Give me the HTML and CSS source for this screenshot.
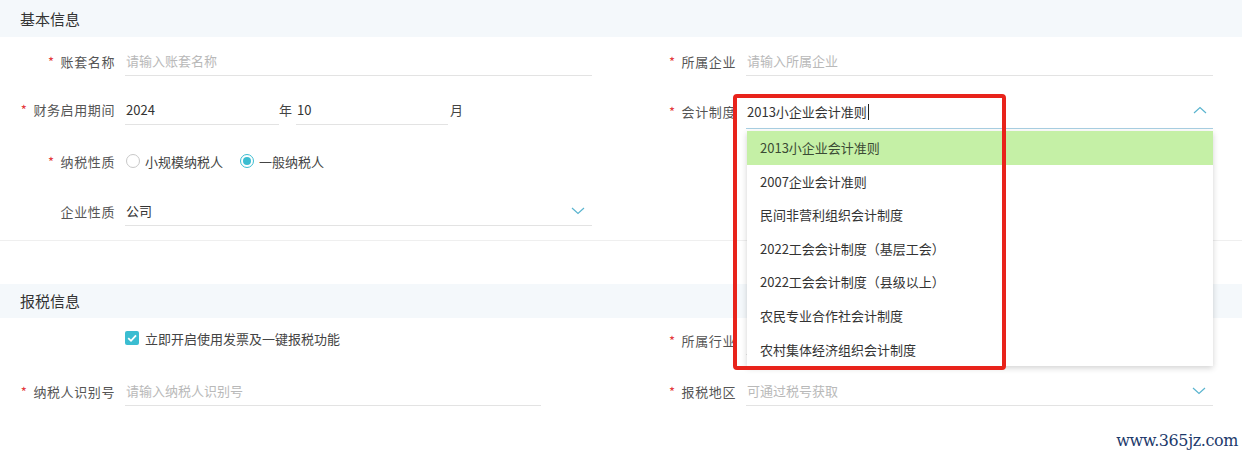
FILE: index.html
```html
<!DOCTYPE html>
<html lang="zh-CN">
<head>
<meta charset="utf-8">
<title>账套</title>
<link rel="stylesheet" href="styles.css">
</head>
<body>
<div class="page">
  <div class="section-title">基本信息</div>
  <div class="grid basic">
    <div class="field">
      <label class="lbl"><span class="req">*</span>账套名称</label>
      <div class="ctl"><span class="ph">请输入账套名称</span></div>
    </div>
    <div class="field">
      <label class="lbl"><span class="req">*</span>所属企业</label>
      <div class="ctl"><span class="ph">请输入所属企业</span></div>
    </div>

    <div class="field up">
      <label class="lbl"><span class="req">*</span>财务启用期间</label>
      <div class="period">
        <div class="ctl year"><span class="val">2024</span></div>
        <span class="unit">年</span>
        <div class="ctl month"><span class="val">10</span></div>
        <span class="unit">月</span>
      </div>
    </div>
    <div class="field">
      <label class="lbl"><span class="req">*</span>会计制度</label>
      <div class="ctl active"><span class="val">2013小企业会计准则</span><span class="caret"></span>
        <svg class="chev" width="14" height="8" viewBox="0 0 14 8"><polyline points="1,7 7,1.5 13,7" fill="none" stroke="#5ab4cf" stroke-width="1.2"/></svg>
      </div>
    </div>

    <div class="field">
      <label class="lbl"><span class="req">*</span>纳税性质</label>
      <div class="radios">
        <span class="radio"><span class="rdot"></span>小规模纳税人</span>
        <span class="radio on"><span class="rdot"></span>一般纳税人</span>
      </div>
    </div>
    <div class="field"></div>

    <div class="field">
      <label class="lbl">企业性质</label>
      <div class="ctl"><span class="val">公司</span>
        <svg class="chev" width="14" height="8" viewBox="0 0 14 8"><polyline points="1,1 7,6.5 13,1" fill="none" stroke="#5ab4cf" stroke-width="1.2"/></svg>
      </div>
    </div>
    <div class="field"></div>
  </div>

  <div class="sep"></div>

  <div class="section-title second">报税信息</div>
  <div class="grid tax">
    <div class="field">
      <label class="lbl"></label>
      <div class="check"><span class="cbox"><svg width="14" height="14" viewBox="0 0 14 14"><polyline points="3.2,7.2 6,9.8 11,4.4" fill="none" stroke="#fff" stroke-width="1.8"/></svg></span>立即开启使用发票及一键报税功能</div>
    </div>
    <div class="field">
      <label class="lbl"><span class="req">*</span>所属行业</label>
      <div class="ctl"></div>
    </div>

    <div class="field">
      <label class="lbl"><span class="req">*</span>纳税人识别号</label>
      <div class="ctl short"><span class="ph">请输入纳税人识别号</span></div>
    </div>
    <div class="field">
      <label class="lbl"><span class="req">*</span>报税地区</label>
      <div class="ctl"><span class="ph">可通过税号获取</span>
        <svg class="chev" width="14" height="8" viewBox="0 0 14 8"><polyline points="1,1 7,6.5 13,1" fill="none" stroke="#5ab4cf" stroke-width="1.2"/></svg>
      </div>
    </div>
  </div>

  <ul class="dropdown">
    <li class="sel">2013小企业会计准则</li>
    <li>2007企业会计准则</li>
    <li>民间非营利组织会计制度</li>
    <li>2022工会会计制度（基层工会）</li>
    <li>2022工会会计制度（县级以上）</li>
    <li>农民专业合作社会计制度</li>
    <li>农村集体经济组织会计制度</li>
  </ul>
  <div class="highlight"></div>

  <div class="watermark">www.365jz.com</div>
</div>
</body>
</html>
```

FILE: styles.css
```css
* { box-sizing: border-box; }
html, body { margin: 0; padding: 0; background: #fff; }
body {
  font-family: "Noto Sans CJK SC", "Noto Sans", sans-serif;
  font-size: 13px;
  color: #333;
}
.page {
  position: relative;
  width: 1242px;
  height: 458px;
  overflow: hidden;
}
.section-title {
  height: 37px;
  line-height: 37px;
  padding-left: 20px;
  font-size: 15px;
  color: #333;
  background: #f4f8fb;
}
.section-title.second {
  margin-top: 43px;
  height: 34px;
  line-height: 34px;
}
.grid {
  display: grid;
  grid-template-columns: 621px 621px;
}
.basic { grid-auto-rows: 50px; margin-top: -1px; }
.tax { grid-template-rows: 44px 58px; }
.field {
  display: flex;
  align-items: center;
}
.field.up { padding-bottom: 3px; }
.lbl {
  width: 115px;
  margin-right: 10px;
  text-align: right;
  color: #555;
  letter-spacing: 0.6px;
  white-space: nowrap;
}
.req {
  color: #e4393c;
  margin-right: 6px;
  font-size: 13px;
}
.ctl {
  position: relative;
  width: 467px;
  height: 30px;
  display: flex;
  align-items: center;
  padding-left: 1px;
  border-bottom: 1px solid #e3e3e3;
}
.ctl.short { width: 416px; }
.ctl.active { border-bottom-color: #a9d0e3; height: 34px; margin-top: 2px; }
.ph { color: #b9b9b9; }
.val { color: #333; }
.caret {
  display: inline-block;
  width: 1px;
  height: 16px;
  background: #222;
  margin-left: 1px;
}
.chev {
  position: absolute;
  right: 7px;
  top: 11px;
}
.ctl.active .chev { top: 11px; right: 6px; }
.period {
  display: flex;
  align-items: center;
}
.ctl.year { width: 154px; }
.ctl.month { width: 152px; }
.unit {
  width: 17px;
  color: #444;
}
.unit:last-child { margin-left: 2px; }
.radios {
  display: flex;
  align-items: center;
  padding-left: 1px;
}
.radio {
  display: inline-flex;
  align-items: center;
  margin-right: 17px;
  color: #444;
}
.rdot {
  width: 14px;
  height: 14px;
  border: 1px solid #c8c8c8;
  border-radius: 50%;
  margin-right: 5px;
  position: relative;
}
.radio.on .rdot { border-color: #3bbdd1; }
.radio.on .rdot::after {
  content: "";
  position: absolute;
  left: 2px; top: 2px;
  width: 8px; height: 8px;
  border-radius: 50%;
  background: #3bbdd1;
}
.check {
  display: flex;
  align-items: center;
  color: #444;
  margin-top: -4px;
}
.cbox {
  width: 14px;
  height: 14px;
  border-radius: 2px;
  background: #3bbdd1;
  margin-right: 6px;
  display: inline-flex;
}
.sep {
  margin-top: 4px;
  border-top: 1px solid #efefef;
}
.dropdown {
  position: absolute;
  left: 747px;
  top: 131px;
  width: 466px;
  margin: 0;
  padding: 0;
  list-style: none;
  background: #fff;
  box-shadow: 0 2px 6px rgba(0,0,0,0.18);
}
.dropdown li {
  height: 33.6px;
  line-height: 33.6px;
  padding-left: 13px;
  color: #333;
}
.dropdown li.sel { background: #c5f0a6; color: #3a4a34; }
.highlight {
  position: absolute;
  left: 733px;
  top: 94px;
  width: 273px;
  height: 276px;
  border: 4px solid #e8231b;
  border-radius: 4px;
}
.watermark {
  position: absolute;
  right: 4px;
  top: 431px;
  font-family: "DejaVu Serif", "Liberation Serif", serif;
  font-size: 16px;
  color: #1d3a6b;
  letter-spacing: -0.4px;
}
```
